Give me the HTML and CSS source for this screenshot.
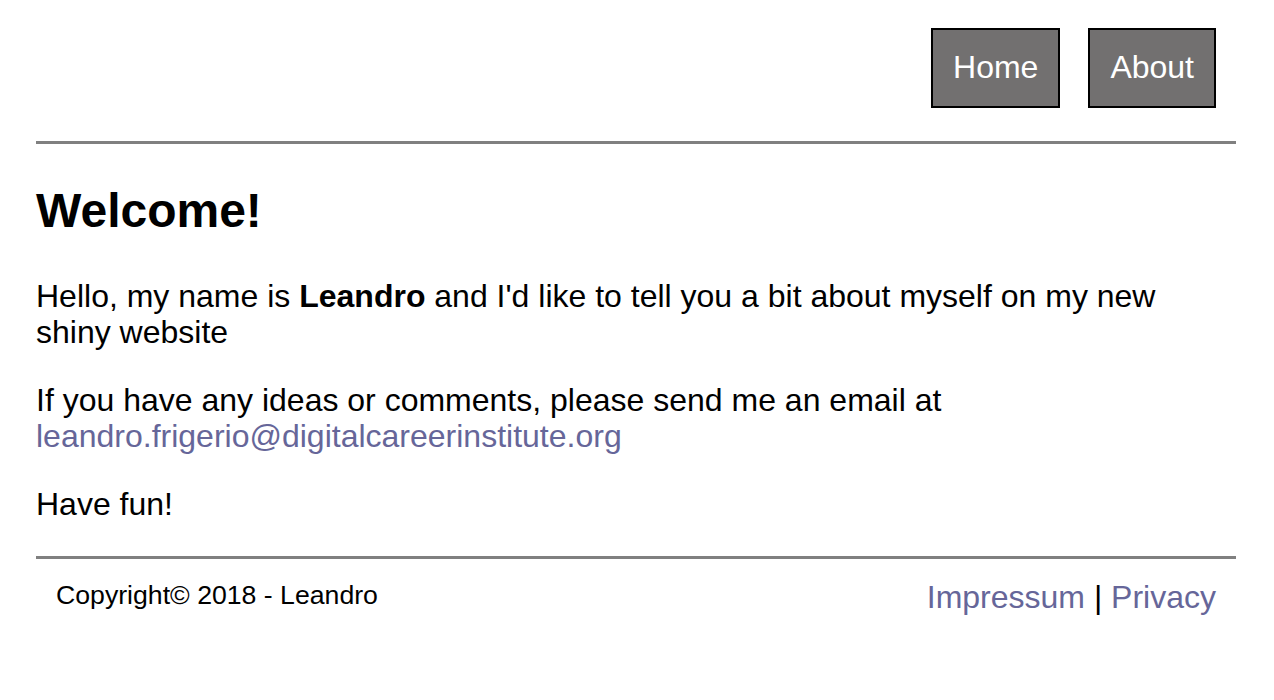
FILE: index.html
```html
<!DOCTYPE html>
<html lang="en">
<head>
<meta charset="utf-8">
<title>Leandro</title>
<link rel="stylesheet" href="styles.css">
</head>
<body>
<div class="page">
  <header class="site-header">
    <nav class="nav">
      <a class="nav-btn" href="#">Home</a>
      <a class="nav-btn" href="#">About</a>
    </nav>
    <hr class="rule rule-top">
  </header>
  <main class="content">
    <h1 class="title">Welcome!</h1>
    <p class="para">Hello, my name is <strong>Leandro</strong> and I'd like to tell you a bit about myself on my new shiny website</p>
    <p class="para">If you have any ideas or comments, please send me an email at <a class="link" href="#">leandro.frigerio@digitalcareerinstitute.org</a></p>
    <p class="para">Have fun!</p>
  </main>
  <footer class="site-footer">
    <hr class="rule rule-bottom">
    <div class="footer-row">
      <span class="copyright">Copyright© 2018 - Leandro</span>
      <span class="footer-links"><a class="link" href="#">Impressum</a> | <a class="link" href="#">Privacy</a></span>
    </div>
  </footer>
</div>
</body>
</html>
```
FILE: styles.css
```css
html, body {
  margin: 0;
  padding: 0;
  background: #ffffff;
}

body {
  font-family: "Liberation Sans", Arial, sans-serif;
  font-size: 32px;
  color: #000000;
}

.page {
  width: 1200px;
  margin-left: 36px;
}

.nav {
  display: flex;
  justify-content: flex-end;
  gap: 28px;
  padding: 28px 20px 0 0;
}

.nav-btn {
  display: block;
  box-sizing: border-box;
  height: 80px;
  line-height: 74px;
  padding: 0 20px;
  border: 2px solid #000000;
  background: #727070;
  color: #ffffff;
  text-decoration: none;
  font-size: 32px;
}

.rule {
  border: 0;
  height: 3px;
  background: #808080;
  margin: 0;
}

.rule-top {
  margin-top: 33px;
}

.title {
  font-size: 48px;
  line-height: 54px;
  font-weight: bold;
  margin: 40px 0 40px;
}

.para {
  margin: 32px 0;
  line-height: 36px;
}

.content {
  padding-bottom: 2px;
}

.link {
  color: #666699;
  text-decoration: none;
}

.rule-bottom {
  margin-top: 0;
}

.footer-row {
  display: flex;
  justify-content: space-between;
  align-items: flex-start;
  padding: 20px 20px 0 20px;
}

.copyright {
  font-size: 26.67px;
  line-height: 32px;
}

.footer-links {
  font-size: 32px;
  line-height: 36px;
}
```
